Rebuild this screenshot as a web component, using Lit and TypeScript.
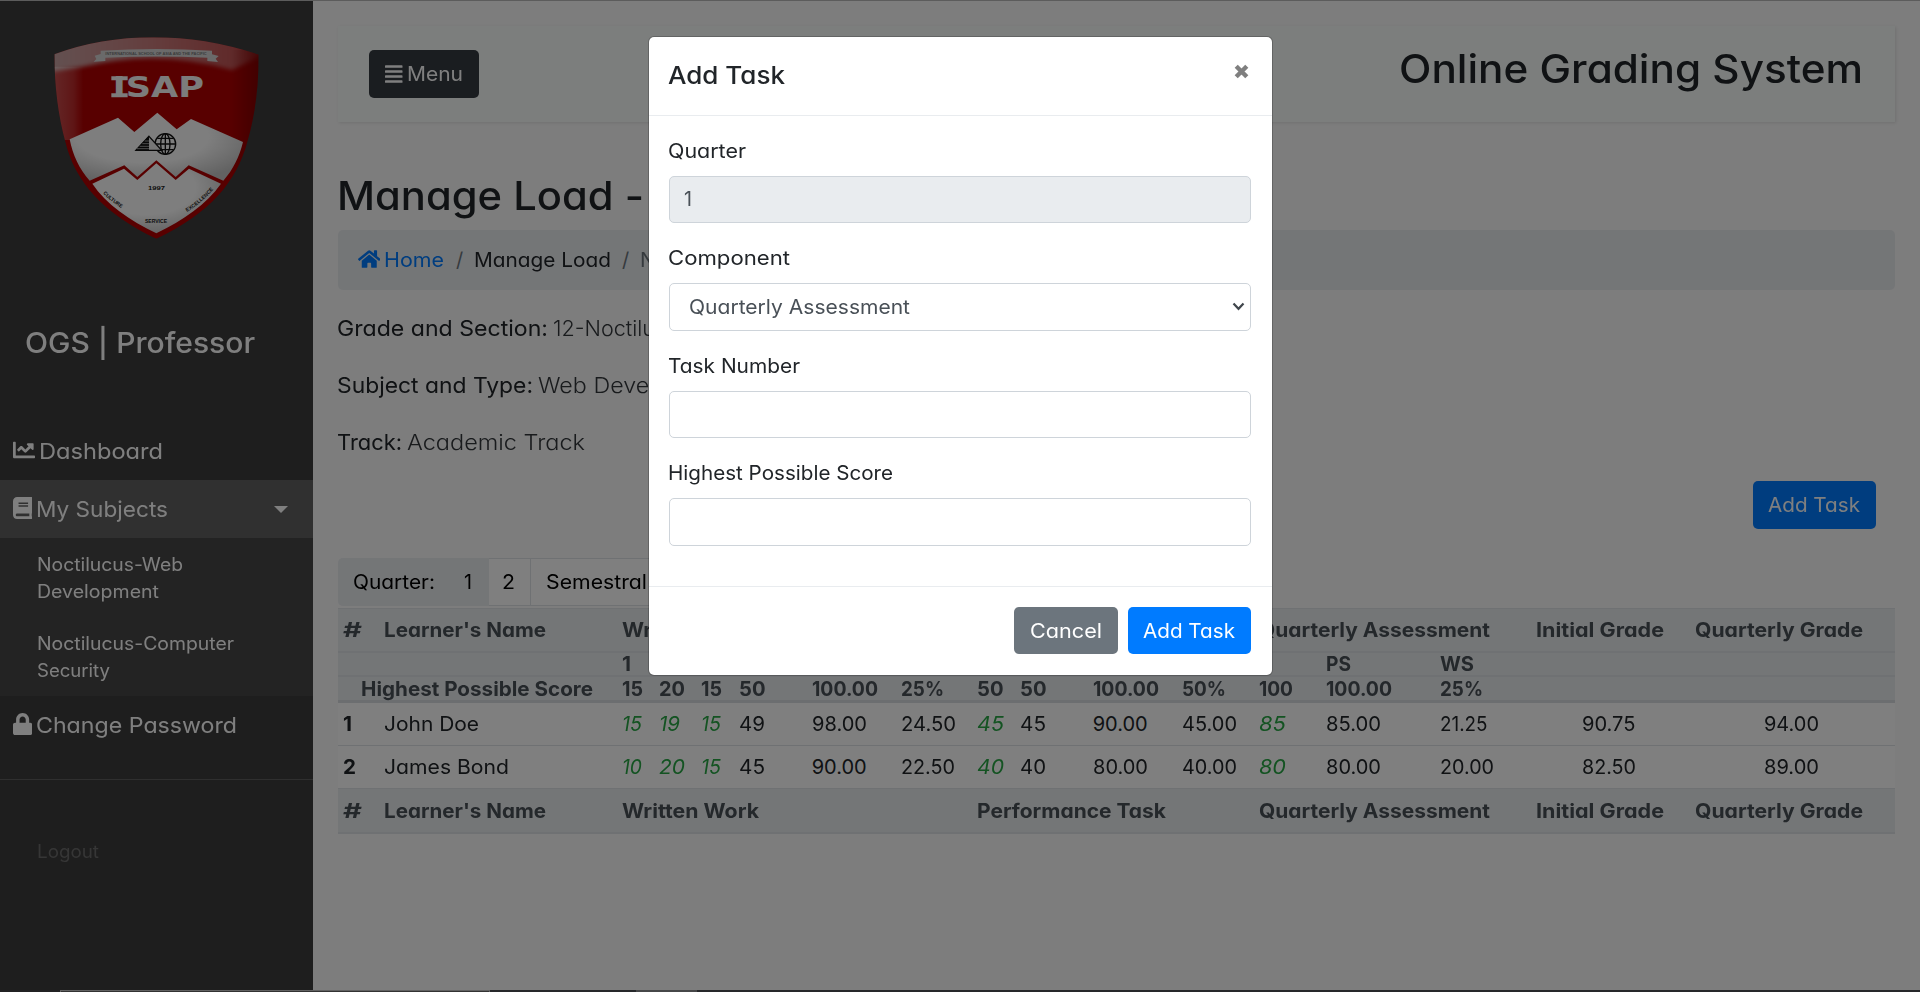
import { LitElement, html, css, svg } from "lit";
import { customElement } from "lit/decorators.js";

const ICONS: Record<string, { box: string; w: number; h: number; d: string }> = {
  chart: { box: "0 0 512 512", w: 22, h: 22, d: "M496 384H64V80c0-8.84-7.16-16-16-16H16C7.16 64 0 71.16 0 80v336c0 17.67 14.33 32 32 32h464c8.84 0 16-7.16 16-16v-32c0-8.84-7.16-16-16-16zM464 96H345.94c-21.38 0-32.09 25.85-16.97 40.97l32.4 32.4L288 242.75l-73.37-73.37c-12.5-12.5-32.76-12.5-45.25 0l-68.69 68.69c-6.25 6.25-6.25 16.38 0 22.63l22.62 22.62c6.25 6.25 16.38 6.25 22.63 0L192 237.25l73.37 73.37c12.5 12.5 32.76 12.5 45.25 0l96-96 32.4 32.4c15.12 15.12 40.97 4.41 40.97-16.97V112c.01-8.84-7.15-16-15.99-16z" },
  book: { box: "0 0 448 512", w: 19.25, h: 22, d: "M448 360V24c0-13.3-10.7-24-24-24H96C43 0 0 43 0 96v320c0 53 43 96 96 96h328c13.3 0 24-10.7 24-24v-16c0-7.5-3.5-14.3-8.9-18.7-4.2-15.4-4.2-59.3 0-74.7 5.4-4.3 8.9-11.1 8.9-18.6zM128 134c0-3.3 2.7-6 6-6h212c3.3 0 6 2.7 6 6v20c0 3.3-2.7 6-6 6H134c-3.3 0-6-2.7-6-6v-20zm0 64c0-3.3 2.7-6 6-6h212c3.3 0 6 2.7 6 6v20c0 3.3-2.7 6-6 6H134c-3.3 0-6-2.7-6-6v-20zm253.4 250H96c-17.7 0-32-14.3-32-32 0-17.6 14.4-32 32-32h285.4c-1.9 17.1-1.9 46.9 0 64z" },
  lock: { box: "0 0 448 512", w: 19.25, h: 22, d: "M400 224h-24v-72C376 68.2 307.8 0 224 0S72 68.2 72 152v72H48c-26.5 0-48 21.5-48 48v192c0 26.5 21.5 48 48 48h352c26.5 0 48-21.5 48-48V272c0-26.5-21.5-48-48-48zm-104 0H152v-72c0-39.7 32.3-72 72-72s72 32.3 72 72v72z" },
  home: { box: "0 0 576 512", w: 22.5, h: 20, d: "M280.37 148.26L96 300.11V464a16 16 0 0 0 16 16l112.06-.29a16 16 0 0 0 15.92-16V368a16 16 0 0 1 16-16h64a16 16 0 0 1 16 16v95.64a16 16 0 0 0 16 16.05L464 480a16 16 0 0 0 16-16V300L295.67 148.26a12.19 12.19 0 0 0-15.3 0zM571.6 251.47L488 182.56V44.05a12 12 0 0 0-12-12h-56a12 12 0 0 0-12 12v72.61L318.47 43a48 48 0 0 0-61 0L4.34 251.47a12 12 0 0 0-1.6 16.9l25.5 31A12 12 0 0 0 45.15 301l235.22-193.74a12.19 12.19 0 0 1 15.3 0L530.9 301a12 12 0 0 0 16.9-1.6l25.5-31a12 12 0 0 0-1.7-16.93z" },
  bars: { box: "0 0 448 512", w: 17.5, h: 20, d: "M16 32h416a16 16 0 0 1 16 16v32a16 16 0 0 1-16 16H16A16 16 0 0 1 0 80V48a16 16 0 0 1 16-16zm0 128h416a16 16 0 0 1 16 16v32a16 16 0 0 1-16 16H16a16 16 0 0 1-16-16v-32a16 16 0 0 1 16-16zm0 128h416a16 16 0 0 1 16 16v32a16 16 0 0 1-16 16H16a16 16 0 0 1-16-16v-32a16 16 0 0 1 16-16zm0 128h416a16 16 0 0 1 16 16v32a16 16 0 0 1-16 16H16a16 16 0 0 1-16-16v-32a16 16 0 0 1 16-16z" },
};

const icon = (name: string) => {
  const i = ICONS[name];
  return html`<svg class="icon" width=${i.w} height=${i.h} viewBox=${i.box}>${svg`<path fill="currentColor" d=${i.d}></path>`}</svg>`;
};

/* A run of text widened to the given ink width in pixels. */
const fit = (text: string, width: number) =>
  html`<span class="fit" data-w=${width}>${text}</span>`;

type Cell = [string, number];
const SCORE: Cell[] = [["15", 19], ["20", 24], ["15", 19], ["50", 24.5], ["100.00", 64], ["25%", 41], ["50", 24.5], ["50", 24.5], ["100.00", 64], ["50%", 42], ["100", 32], ["100.00", 64], ["25%", 41]];
const LEARNERS: { n: Cell; name: Cell; cells: Cell[]; grades: Cell[] }[] = [
  { n: ["1", 7], name: ["John Doe", 93], cells: [["15", 18], ["19", 19], ["15", 18], ["49", 24], ["98.00", 53], ["24.50", 53], ["45", 25], ["45", 24], ["90.00", 53], ["45.00", 53], ["85", 25], ["85.00", 53], ["21.25", 45.5]], grades: [["90.75", 51.5], ["94.00", 53]] },
  { n: ["2", 11], name: ["James Bond", 123], cells: [["10", 18], ["20", 24], ["15", 18], ["45", 24], ["90.00", 53], ["22.50", 52], ["40", 25], ["40", 24], ["80.00", 53], ["40.00", 53], ["80", 25], ["80.00", 53], ["20.00", 52]], grades: [["82.50", 52], ["89.00", 53]] },
];
const RAW = new Set([0, 1, 2, 6, 10]);

@customElement("app-root")
export class AppRoot extends LitElement {
  static styles = css`
    :host { display: block; position: relative; width: 1920px; height: 992px; overflow: hidden; background: #fafafa; color: #212529; font: 400 20px/30px Inter, "Open Sans", sans-serif; font-feature-settings: "cv11"; }
    * { box-sizing: border-box; }
    h2, h3, h5, p { margin: 0; font-weight: 500; }
    .fit { display: inline-block; white-space: nowrap; text-align: left; transform-origin: 0 50%; vertical-align: top; margin: 0 .8px 0 -.8px; }
    .icon { flex: none; display: block; }
    .page { display: flex; height: 992px; padding-top: 1px; }
    .side { width: 313px; flex: none; background: #3c3c3c; color: #fff; }
    .logo { display: block; margin-bottom: 58px; }
    .brand { height: 80px; padding: 25px 0 0 25.5px; font-size: 28.5px; line-height: 36px; font-weight: 500; }
    .nav { margin-top: 42px; padding-bottom: 25px; border-bottom: 1px solid #5e5e5e; }
    .link { display: flex; align-items: center; gap: 5.5px; height: 58px; padding: 0 12.5px; font-size: 22px; }
    .link .icon { margin-top: -2px; }
    .open { background: #606060; }
    .caret { margin-left: auto; margin-right: 12.5px; border: 7px solid transparent; border-top-color: #fff; border-bottom: 0; }
    .sub { background: #464646; }
    .item { height: 79px; padding: 12.5px 0 0 37.5px; font-size: 18px; line-height: 27px; }
    .item .fit, .out .fit { display: block; }
    .out { padding: 58px 0 0 37.5px; font-size: 18px; line-height: 27px; color: #6c6c6c; }
    .main { flex: 1; padding: 25px 25px 0 24.5px; }
    .bar { display: flex; align-items: center; justify-content: space-between; height: 96px; padding: 0 31.5px; background: #f8fcfa; box-shadow: 1px 1px 3px rgba(0,0,0,.1); }
    .bar h2 { font-size: 39px; line-height: 48px; font-weight: 500; margin-bottom: 10px; }
    .btn { display: flex; align-items: center; height: 47.5px; padding: 0 15.5px; border-radius: 5px; color: #fff; background: #007bff; }
    .dark { background: #343a40; gap: 5px; width: 110px; padding: 0 16px; }
    .gray { background: #6c757d; padding: 0 16px; }
    .title { margin-top: 50px; font-size: 39px; line-height: 48px; }
    .crumbs { display: flex; align-items: center; height: 60px; margin: 10px 0 20px; padding: 0 20px; border-radius: 5px; background: #e9ecef; color: #6c757d; }
    .crumbs .home { display: flex; align-items: center; gap: 5px; color: #007bff; width: 98.5px; }
    .crumbs .home .icon { margin-top: -2px; }
    .crumbs .sep { width: 19px; }
    .crumbs .cur { color: #212529; width: 147px; }
    .info { display: flex; gap: 5px; margin-bottom: 19.8px; font-size: 22px; line-height: 37.4px; font-weight: 400; }
    .info .val { font-weight: 300; color: #33373b; }
    .act { display: flex; justify-content: flex-end; padding-right: 19px; margin-top: -.6px; }
    .tabs { display: flex; margin: 29.8px 0 2px; height: 47.5px; color: #000; width: 420px; }
    .tabs div { display: flex; align-items: center; background: #fff; border: 1px solid #dee2e6; border-left: 0; padding-left: 16px; }
    .tabs .q { width: 113px; background: #e9ecef; border-color: #e9ecef; border-radius: 5px 0 0 5px; }
    .tabs .one { width: 38px; background: #e9ecef; border-color: #e9ecef; padding-left: 14px; }
    .tabs .two { width: 42px; padding-left: 14px; }
    .tabs .sem { flex: 1; }
    .table { background: #fff; }
    .row { display: grid; grid-template-columns: 41px 238px 37px 42px 38px 73px 89px 76px 43px 73px 89px 77px 67px 114px 96px 159px 205px; align-items: center; }
    .row > div { padding-left: 6px; }
    .row > .mid { padding: 0; text-align: center; }
    .th { background: #e9ecef; color: #495057; font-weight: 700; border-top: 1px solid #dee2e6; }
    .top { height: 45.5px; border-bottom: 2.5px solid #dee2e6; }
    .thin { height: 24px; line-height: 22px; border: 0; border-bottom: 2px solid #dee2e6; }
    .last { height: 25.5px; border-bottom: 3px solid #d8dce0; }
    .td { height: 43px; padding-bottom: 1px; border-top: 1px solid #dee2e6; }
    .nb { border-top: 0; padding-bottom: 0; height: 42.5px; }
    .raw { color: #28a745; font-style: italic; }
    .bold { font-weight: 700; }
    .c1 { grid-column: 1; } .c2 { grid-column: 2; } .c3 { grid-column: 3 / 9; } .c9 { grid-column: 9 / 13; }
    .c13 { grid-column: 13 / 16; } .c14 { grid-column: 14; } .c15 { grid-column: 15; } .c16 { grid-column: 16; } .c17 { grid-column: 17; }
    .row > .hps { grid-column: 1 / 3; padding-left: 24px; }
    .shade { position: absolute; inset: 0; background: rgba(0,0,0,.5); display: flex; justify-content: center; align-items: flex-start; padding: 36px 0 0 1px; }
    .modal { width: 625px; height: 639.5px; background: #fff; background-clip: padding-box; border: 1px solid rgba(0,0,0,.2); border-radius: 6px; }
    .mhead { display: flex; justify-content: space-between; height: 79px; padding: 20px 23px 0 19.5px; border-bottom: 1px solid #e9ecef; }
    .mhead h5 { font-size: 24.5px; line-height: 37.5px; }
    .close { margin-top: 7px; }
    .mbody { height: 470.5px; padding: 19.5px 20.6px 0 19.6px; border-bottom: 1px solid #e9ecef; }
    .lab { height: 30px; margin-bottom: 10px; }
    .ctl { display: flex; align-items: center; justify-content: space-between; height: 47.5px; margin-bottom: 20px; padding: 0 5px 0 15px; border: 1px solid #ced4da; border-radius: 5px; color: #495057; }
    .off { background: #e9ecef; }
    .sel { padding-left: 20px; }
    .mfoot { display: flex; justify-content: flex-end; gap: 10px; padding: 20px 20.6px; }
    .mfoot .btn { padding-top: 2px; }
    .edge { position: absolute; left: 0; top: 0; width: 100%; height: 1px; background: #5c5c5c; }
    .task { position: absolute; left: 0; bottom: 0; width: 100%; height: 2px; background: #26282a; display: flex; }
    .task .a { width: 60px; background: #212123; }
    .task .b { width: 430px; background: #333; border: 1px solid #616161; border-bottom: 0; }
    .task .c { width: 146px; }
    .task .d { width: 61px; background: #464748; }
  `;

  firstUpdated() {
    const runs = [...this.renderRoot.querySelectorAll<HTMLElement>(".fit")];
    const natural = runs.map((el) => {
      const r = document.createRange();
      r.selectNodeContents(el);
      return r.getBoundingClientRect().width;
    });
    runs.forEach((el, i) => {
      const w = Number(el.dataset.w) + 2;
      el.style.width = `${w}px`;
      el.style.transform = `scaleX(${(w / natural[i]).toFixed(4)})`;
    });
  }

  logo() {
    return html`<svg class="logo" width="313" height="241" viewBox="0 3 939 723">
      <defs>
        <clipPath id="shield"><path d="M163 163Q300 112 460 112Q620 112 776 164Q776 310 742 425C710 545 630 640 469 716C310 640 225 545 196 425Q164 310 163 163Z"></path></clipPath>
        <linearGradient id="gl" x1="0" x2="1"><stop offset="0" stop-color="#fff" stop-opacity=".34"></stop><stop offset=".7" stop-color="#fff" stop-opacity=".17"></stop><stop offset="1" stop-color="#fff" stop-opacity="0"></stop></linearGradient>
        <linearGradient id="gr" x1="0" x2="1"><stop offset="0" stop-opacity="0"></stop><stop offset="1" stop-opacity=".28"></stop></linearGradient>
        <linearGradient id="gt" x1="0" x2="1"><stop offset="0" stop-color="#ccc" stop-opacity=".8"></stop><stop offset=".5" stop-color="#ddd" stop-opacity=".55"></stop><stop offset=".85" stop-color="#ddd" stop-opacity=".38"></stop><stop offset="1" stop-color="#ddd" stop-opacity="0"></stop></linearGradient>
        <radialGradient id="gw" cx=".42" cy=".35" r=".7"><stop offset=".55" stop-color="#fcfcfc"></stop><stop offset="1" stop-color="#c4c4c4"></stop></radialGradient>
        <filter id="soft"><feGaussianBlur stdDeviation="7"></feGaussianBlur></filter>
        <path id="arcL" d="M309 580Q335 607 370 627"></path>
        <path id="arcR" d="M561 636Q605 608 641 568"></path>
      </defs>
      <g clip-path="url(#shield)">
        <rect x="150" y="100" width="640" height="630" fill="#b00000"></rect>
        <path filter="url(#soft)" fill="url(#gt)" d="M140 80H800V160L696 210Q470 145 240 202L150 215Z"></path>
        <path fill="url(#gl)" d="M150 200H250V420H150Z"></path>
        <rect x="690" y="150" width="95" height="420" fill="url(#gr)"></rect>
      </g>
      <path fill="url(#gw)" d="M209 418L354 353L403 396L472 338L530 388L573 357L729 426C718 470 700 508 670 542L566 496L527 531L469 481L412 531L373 496L269 542C238 508 218 465 209 418Z"></path>
      <path fill="url(#gw)" d="M277 551L372 506L412 540L469 490L527 540L567 506L663 551C620 612 550 660 469 700C388 660 318 612 277 551Z"></path>
      <path fill="#d5d5d5" d="M302 152Q470 142 636 152V163L656 168L647 176L654 186L622 183V173Q470 166 316 173V183L281 185L289 177L284 167L302 162Z"></path>
      <text x="316" y="164" font-family="Liberation Sans" font-size="13" font-weight="700" fill="#777" textLength="304" lengthAdjust="spacingAndGlyphs">INTERNATIONAL SCHOOL OF ASIA AND THE PACIFIC</text>
      <text x="338" y="292" font-family="DejaVu Sans, sans-serif" font-size="87" font-weight="700" fill="#f8f8f8" textLength="274" lengthAdjust="spacingAndGlyphs">ISAP</text>
      <path d="M334 229H383V241H334ZM334 280H383V292H334Z" fill="#f8f8f8"></path>
      <g fill="none" stroke="#111" stroke-width="4">
        <circle cx="496" cy="432" r="31"></circle><ellipse cx="496" cy="432" rx="14" ry="31"></ellipse>
        <path d="M496 401V463M465 432H527M472 415H520M472 449H520"></path>
        <path fill="#ededed" d="M447 409L485 451H408Z"></path>
        <path fill="#111" stroke="none" d="M447 407V451H406Z"></path>
        <path stroke="#ddd" stroke-width="2" d="M434 423H447M427 431H447M419 439H447M411 446H447"></path>
      </g>
      <g font-family="Liberation Sans" font-weight="700" fill="#181818" font-size="17">
        <text x="444" y="570" font-size="18" textLength="51" lengthAdjust="spacingAndGlyphs">1997</text>
        <text x="435" y="669" font-size="15" textLength="66" lengthAdjust="spacingAndGlyphs">SERVICE</text>
        <text font-size="15"><textPath href="#arcL">CULTURE</textPath></text>
        <text font-size="15.5"><textPath href="#arcR">EXCELLENCE</textPath></text>
      </g>
    </svg>`;
  }

  headings(cls: string) {
    return html`<div class="row th ${cls}">
      <div class="c1">${fit("#", 17)}</div><div class="c2">${fit("Learner's Name", 160)}</div>
      <div class="c3">${fit("Written Work", 135)}</div><div class="c9">${fit("Performance Task", 187)}</div>
      <div class="c13">${fit("Quarterly Assessment", 229)}</div><div class="c16">${fit("Initial Grade", 126)}</div>
      <div class="c17">${fit("Quarterly Grade", 166)}</div></div>`;
  }

  render() {
    return html`
      <div class="page">
        <aside class="side">
          ${this.logo()}
          <h3 class="brand">${fit("OGS | Professor", 228)}</h3>
          <nav class="nav">
            <div class="link">${icon("chart")}${fit("Dashboard", 122)}</div>
            <div class="link open">${icon("book")}${fit("My Subjects", 130)}<i class="caret"></i></div>
            <div class="sub">
              <div class="item">${fit("Noctilucus-Web", 144)}${fit("Development", 120)}</div>
              <div class="item">${fit("Noctilucus-Computer", 195)}${fit("Security", 71)}</div>
            </div>
            <div class="link">${icon("lock")}${fit("Change Password", 199)}</div>
          </nav>
          <div class="out">${fit("Logout", 60)}</div>
        </aside>
        <main class="main">
          <div class="bar"><div class="btn dark">${icon("bars")}${fit("Menu", 54)}</div><h2>${fit("Online Grading System", 462)}</h2></div>
          <h2 class="title">${fit("Manage Load -", 305)}</h2>
          <div class="crumbs">
            <span class="home">${icon("home")}${fit("Home", 58)}</span><span class="sep">/</span>
            <span class="cur">${fit("Manage Load", 135)}</span><span class="sep">/</span>${fit("Noctilucus", 102)}
          </div>
          <p class="info">${fit("Grade and Section:", 209)}<span class="val">${fit("12-Noctilucus", 136)}</span></p>
          <p class="info">${fit("Subject and Type:", 194)}<span class="val">${fit("Web Development", 197)}</span></p>
          <p class="info">${fit("Track:", 63)}<span class="val">${fit("Academic Track", 176)}</span></p>
          <div class="act"><div class="btn">${fit("Add Task", 90)}</div></div>
          <div class="tabs"><div class="q">${fit("Quarter:", 80)}</div><div class="one">${fit("1", 6)}</div><div class="two">${fit("2", 11)}</div><div class="sem">${fit("Semestral", 99)}</div></div>
          <div class="table">
            ${this.headings("top")}
            <div class="row th thin"><div class="c3">${fit("1", 7)}</div><div class="c14">${fit("PS", 23)}</div><div class="c15">${fit("WS", 32)}</div></div>
            <div class="row th thin last"><div class="hps">${fit("Highest Possible Score", 230)}</div>${SCORE.map(c => html`<div>${fit(...c)}</div>`)}</div>
            ${LEARNERS.map((l, r) => html`<div class="row td ${r ? "" : "nb"}">
              <div class="bold">${fit(...l.n)}</div><div>${fit(...l.name)}</div>
              ${l.cells.map((c, i) => html`<div class=${RAW.has(i) ? "raw" : ""}>${fit(...c)}</div>`)}
              ${l.grades.map(c => html`<div class="mid">${fit(...c)}</div>`)}</div>`)}
            ${this.headings("top")}
          </div>
        </main>
      </div>
      <div class="shade">
        <div class="modal">
          <div class="mhead"><h5>${fit("Add Task", 115)}</h5>
            <svg class="close" width="15" height="15" viewBox="0 0 15 15"><path d="M2.2 2.2L12.8 12.8M12.8 2.2L2.2 12.8" stroke="#7f7f7f" stroke-width="4.4"></path></svg></div>
          <div class="mbody">
            <div class="lab">${fit("Quarter", 76)}</div><div class="ctl off">${fit("1", 6)}</div>
            <div class="lab">${fit("Component", 120)}</div>
            <div class="ctl sel">${fit("Quarterly Assessment", 219)}<svg width="13" height="9" viewBox="0 0 13 9"><path d="M1.5 1.5L6.5 6.8L11.5 1.5" fill="none" stroke="#40464c" stroke-width="2.2"></path></svg></div>
            <div class="lab">${fit("Task Number", 130)}</div><div class="ctl"></div>
            <div class="lab">${fit("Highest Possible Score", 223)}</div><div class="ctl"></div>
          </div>
          <div class="mfoot"><div class="btn gray">${fit("Cancel", 70)}</div><div class="btn">${fit("Add Task", 90)}</div></div>
        </div>
      </div>
      <div class="edge"></div>
      <div class="task"><i class="a"></i><i class="b"></i><i class="c"></i><i class="d"></i></div>`;
  }
}
